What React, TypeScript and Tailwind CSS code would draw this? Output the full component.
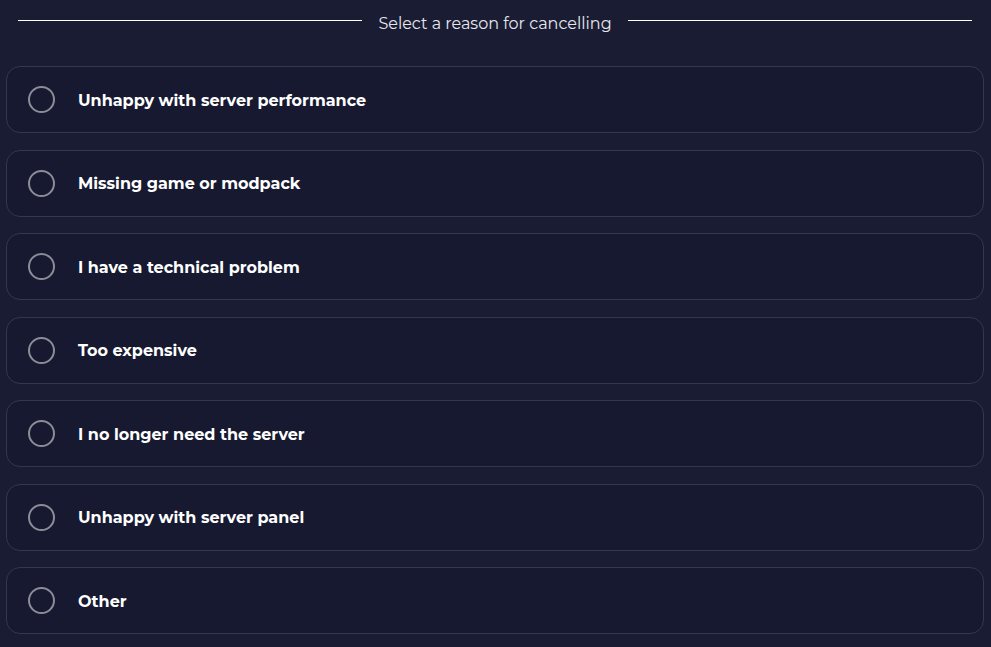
import React from "react";

const reasons = [
  "Unhappy with server performance",
  "Missing game or modpack",
  "I have a technical problem",
  "Too expensive",
  "I no longer need the server",
  "Unhappy with server panel",
  "Other",
];

export default function App() {
  const [selected, setSelected] = React.useState<number | null>(null);

  return (
    <div
      className="min-h-screen bg-[#1a1c33] pl-[6px] pr-[7px] pt-[7px]"
      style={{ fontFamily: "Montserrat, Inter, 'Noto Sans', sans-serif" }}
    >
      {/* Heading with rules on both sides */}
      <div className="flex items-center gap-4 px-3 h-[26px]">
        <div className="h-px flex-1 bg-white" />
        <span className="pt-[7px] text-[16px] text-[#e6e7ee] leading-none">Select a reason for cancelling</span>
        <div className="h-px flex-1 bg-white" />
      </div>

      <div className="mt-[33px] flex flex-col gap-[16.5px]">
        {reasons.map((reason, i) => (
          <button
            key={reason}
            onClick={() => setSelected(i)}
            className="flex h-[67px] items-center gap-[23px] rounded-[14px] border border-[#34374f] bg-[#161930] pl-[21px] text-left"
          >
            <span className="flex h-[27px] w-[27px] shrink-0 items-center justify-center rounded-full border-2 border-[#8c8d96]">
              {selected === i && <span className="h-[13px] w-[13px] rounded-full bg-white" />}
            </span>
            <span className="pt-[2px] text-[16px] font-bold text-white">{reason}</span>
          </button>
        ))}
      </div>
    </div>
  );
}
